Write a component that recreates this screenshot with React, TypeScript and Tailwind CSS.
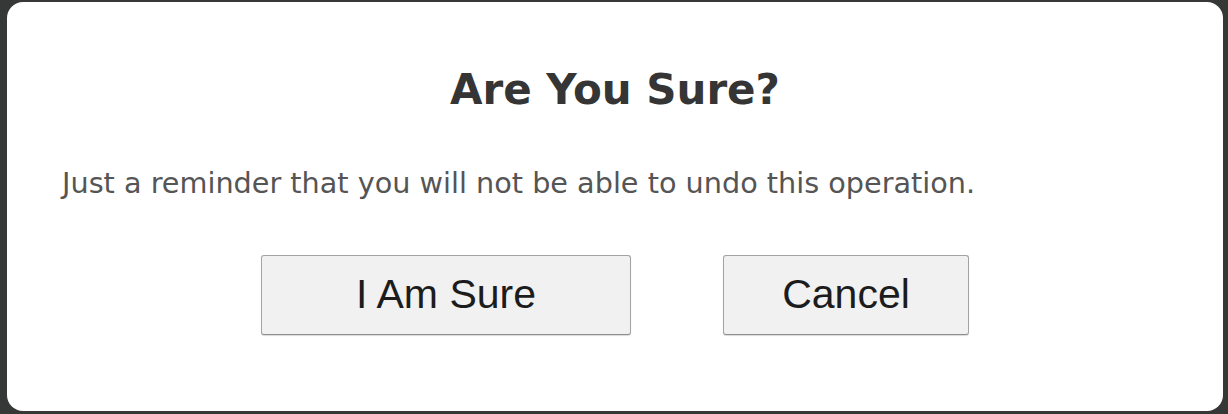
function DialogButton({ label, width }: { label: string; width: string }) {
  return (
    <button
      className={`${width} h-[80px] bg-[#f1f1f1] border border-[#a3a3a3] border-b-[#8e8e8e] rounded-[3px] shadow-[0_1px_1px_rgba(0,0,0,0.15)] text-[41px] text-[#1c1c1c] font-['Liberation_Sans',Arial,sans-serif]`}
    >
      {label}
    </button>
  );
}

export default function App() {
  return (
    <div className="w-[1228px] h-[414px] bg-[#353836] pl-[7px] pr-[5px] pt-[2px] pb-[3px]">
      <div className="h-full bg-white rounded-[16px] flex flex-col font-['DejaVu_Sans',sans-serif]">
        <h1 className="mt-[67px] text-center text-[42px] leading-none font-bold text-[#353535]">
          Are You Sure?
        </h1>
        <p className="mt-[58px] pl-[55px] text-[28.7px] leading-none text-[#555555]">
          Just a reminder that you will not be able to undo this operation.
        </p>
        <div className="mt-[57px] flex justify-center gap-[92px]">
          <DialogButton label="I Am Sure" width="w-[370px]" />
          <DialogButton label="Cancel" width="w-[246px]" />
        </div>
      </div>
    </div>
  );
}
